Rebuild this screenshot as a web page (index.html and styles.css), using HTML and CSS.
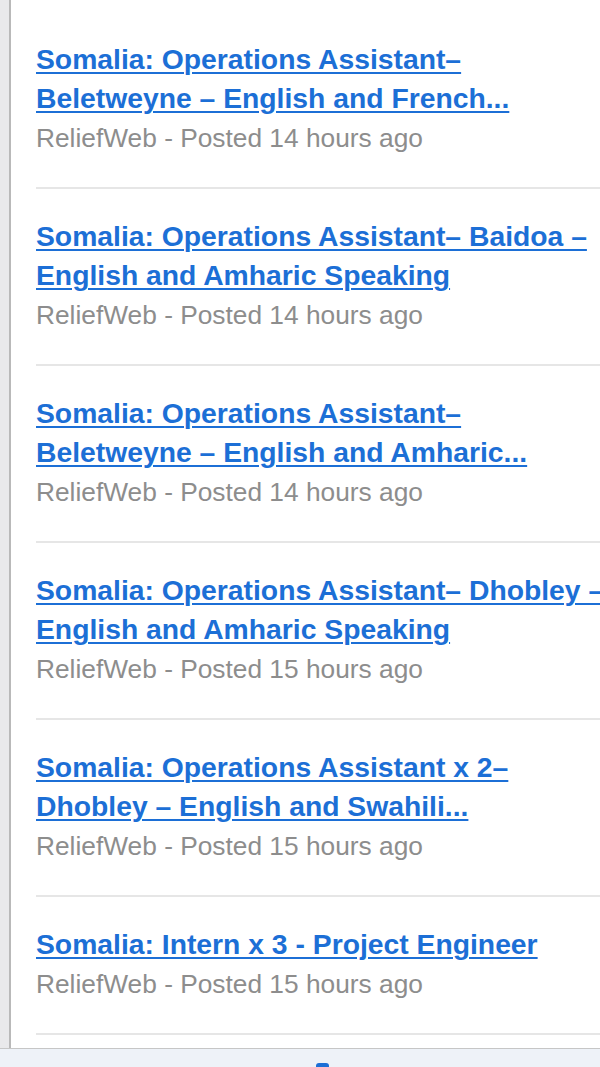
FILE: index.html
```html
<!DOCTYPE html>
<html lang="en">
<head>
<meta charset="utf-8">
<title>Jobs</title>
<link rel="stylesheet" href="styles.css">
</head>
<body>
<div class="page">
  <main class="content">
    <ul class="list">
      <li class="item">
        <a class="title" href="#">Somalia: Operations Assistant– Beletweyne – English and French...</a>
        <div class="meta">ReliefWeb - Posted 14 hours ago</div>
      </li>
      <li class="item">
        <a class="title" href="#">Somalia: Operations Assistant– Baidoa – English and Amharic Speaking</a>
        <div class="meta">ReliefWeb - Posted 14 hours ago</div>
      </li>
      <li class="item">
        <a class="title" href="#">Somalia: Operations Assistant– Beletweyne – English and Amharic...</a>
        <div class="meta">ReliefWeb - Posted 14 hours ago</div>
      </li>
      <li class="item">
        <a class="title" href="#">Somalia: Operations Assistant– Dhobley – English and Amharic Speaking</a>
        <div class="meta">ReliefWeb - Posted 15 hours ago</div>
      </li>
      <li class="item">
        <a class="title" href="#">Somalia: Operations Assistant x 2– Dhobley – English and Swahili...</a>
        <div class="meta">ReliefWeb - Posted 15 hours ago</div>
      </li>
      <li class="item">
        <a class="title" href="#">Somalia: Intern x 3 - Project Engineer</a>
        <div class="meta">ReliefWeb - Posted 15 hours ago</div>
      </li>
    </ul>
  </main>
  <footer class="toolbar">
    <span class="tool-icon"></span>
  </footer>
</div>
</body>
</html>
```
FILE: styles.css
```css
html, body {
  margin: 0;
  padding: 0;
  overflow: hidden;
}
body {
  background: #e9e9eb;
  font-family: "Liberation Sans", Arial, Helvetica, sans-serif;
}
.page {
  height: 1067px;
  display: flex;
  flex-direction: column;
}
.content {
  flex: 1;
  min-height: 0;
  overflow: hidden;
  margin-left: 9px;
  border-left: 2px solid #b9b9b9;
  background: #ffffff;
  padding-bottom: 13px;
  display: flex;
  flex-direction: column;
  justify-content: flex-end;
}
.list {
  list-style: none;
  margin: 0;
  padding: 0 0 0 25px;
}
.item {
  padding: 28px 0 29px;
  border-bottom: 2px solid #e6e6e6;
  display: flex;
  flex-direction: column;
}
.title {
  width: 574px;
  font-size: 28.3px;
  font-weight: bold;
  line-height: 39px;
  color: #1c6fd6;
  text-decoration: underline;
  text-decoration-thickness: 2px;
  text-underline-offset: 3px;
}
.meta {
  font-size: 26.3px;
  line-height: 40px;
  color: #8d8d8d;
  white-space: nowrap;
}
.toolbar {
  height: 19px;
  flex: 0 0 19px;
  background: #eef2f8;
  border-top: 1px solid #c6c6c6;
  display: flex;
  justify-content: center;
  align-items: flex-start;
  padding-top: 14px;
  box-sizing: border-box;
  overflow: hidden;
}
.tool-icon {
  display: block;
  width: 13px;
  height: 10px;
  margin-left: 44px;
  background: #1c6fd6;
  border-radius: 3px 3px 0 0;
}
```
